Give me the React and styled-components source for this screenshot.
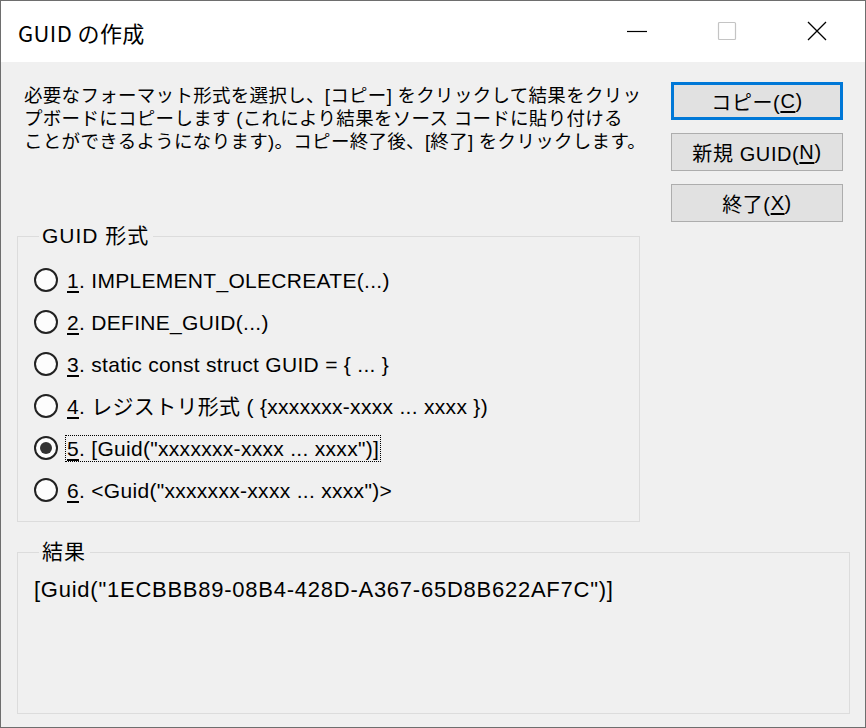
import React, { useState } from 'react';
import styled, { createGlobalStyle } from 'styled-components';

const GlobalStyle = createGlobalStyle`
  html, body {
    margin: 0;
    padding: 0;
    background: #ffffff;
  }
  * {
    box-sizing: border-box;
  }
`;

const UI_FONT = `"Liberation Sans", "Noto Sans CJK JP", sans-serif`;
const TITLE_FONT = `"Noto Sans CJK JP", "Noto Sans", sans-serif`;

const formats = [
  { key: '1', label: '. IMPLEMENT_OLECREATE(...)' },
  { key: '2', label: '. DEFINE_GUID(...)' },
  { key: '3', label: '. static const struct GUID = { ... }' },
  { key: '4', label: '. レジストリ形式 ( {xxxxxxx-xxxx ... xxxx })' },
  { key: '5', label: '. [Guid("xxxxxxx-xxxx ... xxxx")]' },
  { key: '6', label: '. <Guid("xxxxxxx-xxxx ... xxxx")>' },
];

function App() {
  const [selected, setSelected] = useState('5');

  return (
    <>
      <GlobalStyle />
      <Window>
        <TitleBar>
          <Title>GUID の作成</Title>
          <Controls>
            <ControlButton aria-label="minimize">
              <svg width="22" height="22" viewBox="0 0 22 22">
                <line x1="1" y1="11.5" x2="21" y2="11.5" stroke="#000" strokeWidth="1.2" />
              </svg>
            </ControlButton>
            <ControlButton aria-label="maximize">
              <svg width="22" height="22" viewBox="0 0 22 22">
                <rect x="2.5" y="2.5" width="17" height="17" rx="1" fill="none" stroke="#c4c4c4" strokeWidth="1.2" />
              </svg>
            </ControlButton>
            <ControlButton aria-label="close">
              <svg width="22" height="22" viewBox="0 0 22 22">
                <path d="M2 2 L20 20 M20 2 L2 20" stroke="#000" strokeWidth="1.3" />
              </svg>
            </ControlButton>
          </Controls>
        </TitleBar>

        <Body>
          <TopArea>
            <LeftColumn>
              <Description>
                必要なフォーマット形式を選択し、[コピー] をクリックして結果をクリッ<br />
                プボードにコピーします (これにより結果をソース コードに貼り付ける<br />
                ことができるようになります)。コピー終了後、[終了] をクリックします。
              </Description>

              <GroupBox $width={623}>
                <Legend>GUID 形式</Legend>
                {formats.map((f) => (
                  <RadioRow key={f.key} onClick={() => setSelected(f.key)}>
                    <RadioCircle $checked={selected === f.key} />
                    <RadioLabel $focused={selected === f.key}>
                      <u>{f.key}</u>{f.label}
                    </RadioLabel>
                  </RadioRow>
                ))}
              </GroupBox>
            </LeftColumn>

            <ButtonColumn>
              <PushButton $default>コピー(<u>C</u>)</PushButton>
              <PushButton>新規 GUID(<u>N</u>)</PushButton>
              <PushButton>終了(<u>X</u>)</PushButton>
            </ButtonColumn>
          </TopArea>

          <ResultBox>
            <Legend>結果</Legend>
            <ResultText>[Guid("1ECBBB89-08B4-428D-A367-65D8B622AF7C")]</ResultText>
          </ResultBox>
        </Body>
      </Window>
    </>
  );
}

const Window = styled.div`
  width: 866px;
  height: 728px;
  border: 1px solid #6e6e6e;
  display: flex;
  flex-direction: column;
  font-family: ${UI_FONT};
  color: #000;
  overflow: hidden;
`;

const TitleBar = styled.div`
  height: 61px;
  background: #ffffff;
  display: flex;
  align-items: center;
  justify-content: space-between;
  padding-left: 17px;
`;

const Title = styled.div`
  font-family: ${TITLE_FONT};
  font-size: 22px;
  line-height: 26px;
  letter-spacing: 0.4px;
  margin-top: 1px;
`;

const Controls = styled.div`
  display: flex;
  height: 100%;
  margin-right: 3px;
`;

const ControlButton = styled.div`
  width: 90px;
  height: 100%;
  display: flex;
  align-items: center;
  justify-content: center;
  padding-bottom: 2px;
`;

const Body = styled.div`
  flex: 1;
  background: #f0f0f0;
  padding: 20px 15px 13px 16px;
  display: flex;
  flex-direction: column;
`;

const TopArea = styled.div`
  display: flex;
  gap: 31px;
`;

const LeftColumn = styled.div`
  width: 623px;
  display: flex;
  flex-direction: column;
`;

const Description = styled.div`
  margin: 2px 0 0 7px;
  font-size: 18.5px;
  line-height: 23px;
  white-space: nowrap;
  letter-spacing: 0.3px;
`;

const GroupBox = styled.fieldset`
  margin: 71px 0 0 0;
  width: ${({ $width }) => $width}px;
  border: 1px solid #dcdcdc;
  padding: 11px 10px 10px 16px;
  min-width: 0;
`;

const Legend = styled.legend`
  margin-left: 5px;
  padding: 0 4px 0 3px;
  font-size: 21px;
  line-height: 24px;
  letter-spacing: 1px;
`;

const RadioRow = styled.div`
  height: 42px;
  display: flex;
  align-items: center;
  gap: 7px;
  cursor: default;
`;

const RadioCircle = styled.span`
  width: 24px;
  height: 24px;
  border-radius: 50%;
  border: 2px solid #222;
  background: #fdfdfd;
  flex-shrink: 0;
  display: flex;
  align-items: center;
  justify-content: center;

  &::after {
    content: '';
    width: 12px;
    height: 12px;
    border-radius: 50%;
    background: #333;
    display: ${({ $checked }) => ($checked ? 'block' : 'none')};
  }
`;

const RadioLabel = styled.span`
  font-size: 21px;
  line-height: 25px;
  letter-spacing: 0.3px;
  padding: 0 1px;
  border: 1px dotted ${({ $focused }) => ($focused ? '#000' : 'transparent')};
  white-space: nowrap;

  u {
    text-underline-offset: 3px;
  }
`;

const ButtonColumn = styled.div`
  width: 172px;
  display: flex;
  flex-direction: column;
  gap: 13px;
`;

const PushButton = styled.button`
  height: 38px;
  width: 100%;
  font-family: ${UI_FONT};
  font-size: 20px;
  letter-spacing: 0.6px;
  color: #000;
  background: #e1e1e1;
  border: ${({ $default }) => ($default ? '3px solid #0078d7' : '1px solid #adadad')};
  padding: 0;
  display: flex;
  align-items: center;
  justify-content: center;

  u {
    text-underline-offset: 3px;
  }
`;

const ResultBox = styled.fieldset`
  margin: 18px 0 0 0;
  flex: 1;
  border: 1px solid #dcdcdc;
  padding: 14px 10px 10px 16px;
  min-width: 0;
`;

const ResultText = styled.div`
  font-size: 22px;
  line-height: 23px;
  letter-spacing: 0.75px;
  white-space: nowrap;
`;

export default App;
